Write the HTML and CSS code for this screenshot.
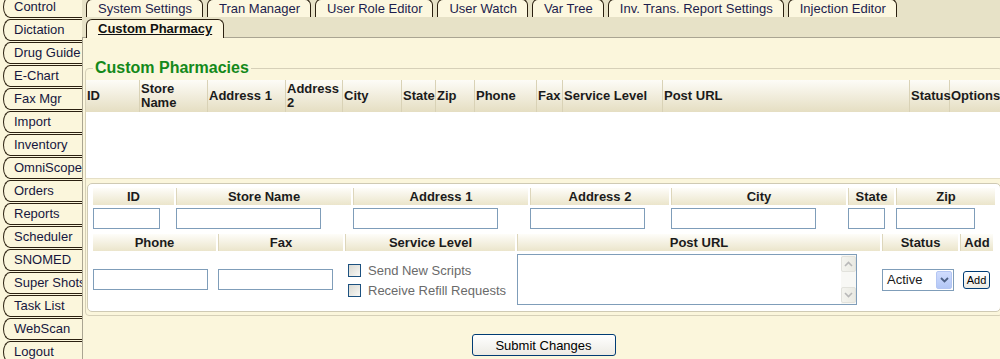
FILE: index.html
```html
<!DOCTYPE html>
<html lang="en">
<head>
  <meta charset="UTF-8" />
  <title>Custom Pharmacy</title>
  <link rel="stylesheet" href="styles.css">
</head>
<body>
  <div class="page">
    <nav class="sidebar">
      <a class="side-tab" href="#">Control</a>
      <a class="side-tab" href="#">Dictation</a>
      <a class="side-tab" href="#">Drug Guide</a>
      <a class="side-tab" href="#">E-Chart</a>
      <a class="side-tab" href="#">Fax Mgr</a>
      <a class="side-tab" href="#">Import</a>
      <a class="side-tab" href="#">Inventory</a>
      <a class="side-tab" href="#">OmniScope</a>
      <a class="side-tab" href="#">Orders</a>
      <a class="side-tab" href="#">Reports</a>
      <a class="side-tab" href="#">Scheduler</a>
      <a class="side-tab" href="#">SNOMED</a>
      <a class="side-tab" href="#">Super Shots</a>
      <a class="side-tab" href="#">Task List</a>
      <a class="side-tab" href="#">WebScan</a>
      <a class="side-tab" href="#">Logout</a>
    </nav>

    <div class="main">
      <div class="tabbar">
        <ul class="tabs top-row">
          <li>System Settings</li>
          <li>Tran Manager</li>
          <li>User Role Editor</li>
          <li>User Watch</li>
          <li>Var Tree</li>
          <li>Inv. Trans. Report Settings</li>
          <li>Injection Editor</li>
        </ul>
        <ul class="tabs sub-row">
          <li class="active">Custom Pharmacy</li>
        </ul>
      </div>

      <div class="content">
        <fieldset class="pharmacies">
          <legend>Custom Pharmacies</legend>

          <div class="list">
            <div class="list-head">
              <div>ID</div>
              <div>Store Name</div>
              <div>Address 1</div>
              <div>Address 2</div>
              <div>City</div>
              <div>State</div>
              <div>Zip</div>
              <div>Phone</div>
              <div>Fax</div>
              <div>Service Level</div>
              <div>Post URL</div>
              <div>Status</div>
              <div>Options</div>
            </div>
            <div class="list-body"></div>
          </div>

          <div class="editor">
            <div class="edit-row row-a heads">
              <div class="head">ID</div>
              <div class="head">Store Name</div>
              <div class="head">Address 1</div>
              <div class="head">Address 2</div>
              <div class="head">City</div>
              <div class="head">State</div>
              <div class="head">Zip</div>
            </div>
            <div class="edit-row row-a fields">
              <div><input type="text" class="w-id"></div>
              <div><input type="text" class="w-wide"></div>
              <div><input type="text" class="w-wide"></div>
              <div><input type="text" class="w-mid"></div>
              <div><input type="text" class="w-wide"></div>
              <div><input type="text" class="w-state"></div>
              <div><input type="text" class="w-zip"></div>
            </div>
            <div class="edit-row row-b heads">
              <div class="head">Phone</div>
              <div class="head">Fax</div>
              <div class="head">Service Level</div>
              <div class="head">Post URL</div>
              <div class="head">Status</div>
              <div class="head">Add</div>
            </div>
            <div class="edit-row row-b fields tall">
              <div class="cell-mid"><input type="text" class="w-mid"></div>
              <div class="cell-mid"><input type="text" class="w-mid"></div>
              <div class="checks">
                <label class="check"><input type="checkbox"> Send New Scripts</label>
                <label class="check"><input type="checkbox"> Receive Refill Requests</label>
              </div>
              <div class="url-box">
                <div class="url-text"></div>
                <div class="scrollbar">
                  <span class="sb-btn">
                    <svg width="9" height="6" viewBox="0 0 9 6"><path d="M1 5 L4.5 1.5 L8 5" fill="none" stroke="#b8b8b8" stroke-width="1.6"/></svg>
                  </span>
                  <span class="sb-track"></span>
                  <span class="sb-btn">
                    <svg width="9" height="6" viewBox="0 0 9 6"><path d="M1 1 L4.5 4.5 L8 1" fill="none" stroke="#b8b8b8" stroke-width="1.6"/></svg>
                  </span>
                </div>
              </div>
              <div class="cell-mid">
                <div class="select">
                  <span class="select-value">Active</span>
                  <span class="select-arrow">
                    <svg width="9" height="6" viewBox="0 0 9 6"><path d="M1 1 L4.5 4.5 L8 1" fill="none" stroke="#4d6185" stroke-width="1.8"/></svg>
                  </span>
                </div>
              </div>
              <div class="cell-mid"><button class="add-btn">Add</button></div>
            </div>
          </div>
        </fieldset>

        <div class="actions">
          <button class="submit-btn">Submit Changes</button>
        </div>
      </div>
    </div>
  </div>
</body>
</html>
```

FILE: styles.css
```css
body {
  margin: 0;
  font-family: "Liberation Sans", Arial, sans-serif;
  font-size: 13px;
  background: #fbf6dc;
  color: #1b1b1b;
  overflow: hidden;
}

.page {
  display: flex;
  height: 359px;
}

/* left navigation */
.sidebar {
  width: 82px;
  flex: none;
  margin-top: -4px;
  overflow: hidden;
  background: #fbf6dc;
}

.side-tab {
  display: block;
  height: 20px;
  line-height: 20px;
  margin: 0 0 1px 3px;
  padding-left: 10px;
  border: 1px solid #2b2010;
  border-right: none;
  border-radius: 7px 0 0 7px / 11px 0 0 11px;
  white-space: nowrap;
  overflow: hidden;
  color: #16163e;
  text-decoration: none;
}

.main {
  flex: 1;
  display: flex;
  flex-direction: column;
}

/* tab strip */
.tabbar {
  background: #e7e2c7;
  height: 37px;
  border-bottom: 1px solid #aaa592;
  padding-left: 4px;
}

.tabs {
  list-style: none;
  margin: 0;
  padding: 0;
  display: flex;
  gap: 4px;
}

.tabs li {
  background: #fcf7df;
  border: 1px solid #2b2010;
  border-bottom: none;
  border-radius: 6px 6px 0 0;
  padding: 0 10px 0 11px;
  white-space: nowrap;
  color: #1d1d4d;
}

.top-row {
  margin-top: -1px;
}

.top-row li {
  height: 17px;
  line-height: 17px;
}

.sub-row {
  margin-top: 2px;
}

.sub-row li {
  height: 18px;
  line-height: 18px;
  padding: 0 11px;
  font-weight: bold;
  color: #111;
  text-decoration: underline;
}

/* content */
.content {
  flex: 1;
  border-left: 1px solid #aaa592;
  background: #fbf6dc;
}

.pharmacies {
  margin: 21px 1px 0 2px;
  padding: 3px 0 3px 0;
  border: 1px solid #d6d0b8;
  border-radius: 4px;
  min-width: 0;
}

.pharmacies legend {
  margin-left: 7px;
  padding: 0 2px;
  font-size: 16px;
  line-height: 18px;
  font-weight: bold;
  color: #14891a;
}

.list-head {
  display: grid;
  grid-template-columns: 54px 68px 78px 57px 59px 34px 39px 62px 26px 100px 247px 40px 48px;
  height: 32px;
  background: linear-gradient(#fdfcf7, #e5dec2);
  font-weight: bold;
  line-height: 14px;
}

.list-head div {
  display: flex;
  align-items: center;
  padding-left: 1px;
  border-right: 1px solid #d9d2b6;
}

.list-head div:last-child {
  border-right: none;
}

.list-body {
  height: 66px;
  background: #fff;
  border-bottom: 1px solid #e5dfc6;
}

/* add / edit panel */
.editor {
  margin: 4px 1px 0;
  padding: 4px 5px 6px;
  background: #fff;
  border: 1px solid #cfcab4;
  border-radius: 5px;
  display: flex;
  flex-direction: column;
}

.edit-row {
  display: grid;
  column-gap: 2px;
}

.row-a {
  grid-template-columns: 81px 175px 175px 139px 175px 46px 99px;
}

.row-b {
  grid-template-columns: 123px 125px 170px 363px 76px 33px;
}

.heads {
  height: 17px;
}

.head {
  background: linear-gradient(#fefdf9, #ebe5cb);
  border-left: 1px solid #ddd6bb;
  font-weight: bold;
  text-align: center;
  line-height: 17px;
  white-space: nowrap;
}

.head:first-child {
  border-left: none;
}

.fields {
  height: 21px;
  margin: 3px 0 5px;
}

.fields.tall {
  height: 51px;
  margin-bottom: 0;
}

.edit-row input[type="text"] {
  box-sizing: border-box;
  height: 21px;
  margin: 0;
  padding: 0 2px;
  border: 1px solid #7f9db9;
  background: #fff;
  font: inherit;
  display: block;
}

.w-id { width: 67px; }
.w-wide { width: 145px; }
.w-mid { width: 115px; }
.w-state { width: 37px; }
.w-zip { width: 79px; }

.cell-mid {
  display: flex;
  align-items: center;
}

.checks {
  display: flex;
  flex-direction: column;
  justify-content: center;
  gap: 7px;
  padding: 1px 0 0 3px;
}

.check {
  display: flex;
  align-items: center;
  gap: 7px;
  height: 13px;
  color: #6a6a6a;
  white-space: nowrap;
}

.check input {
  appearance: none;
  width: 13px;
  height: 13px;
  margin: 0;
  border: 1px solid #1c5180;
  background: linear-gradient(135deg, #d9d9d2, #f8f8f5);
  flex: none;
}

.url-box {
  box-sizing: border-box;
  width: 340px;
  height: 51px;
  border: 1px solid #7f9db9;
  display: flex;
  background: #fff;
}

.url-text {
  flex: 1;
}

.scrollbar {
  width: 15px;
  display: flex;
  flex-direction: column;
  background: #f8f8f5;
  padding: 1px 0;
}

.sb-btn {
  box-sizing: border-box;
  height: 16px;
  border: 1px solid #e2e2dc;
  border-radius: 2px;
  background: linear-gradient(90deg, #f4f4ef, #eaeae3);
  display: flex;
  align-items: center;
  justify-content: center;
}

.sb-track {
  flex: 1;
}

.select {
  box-sizing: border-box;
  width: 72px;
  height: 22px;
  border: 1px solid #7f9db9;
  background: #fff;
  display: flex;
  align-items: center;
  padding: 1px;
}

.select-value {
  flex: 1;
  padding-left: 3px;
}

.select-arrow {
  box-sizing: border-box;
  width: 16px;
  height: 18px;
  border: 1px solid #b4c6f3;
  border-radius: 2px;
  background: linear-gradient(#d0dcfd, #b3c7f6);
  display: flex;
  align-items: center;
  justify-content: center;
}

.add-btn {
  width: 27px;
  height: 18px;
  margin-left: 3px;
  padding: 0;
  border: 1px solid #003c74;
  border-radius: 3px;
  background: linear-gradient(#ffffff, #ecebe4);
  font-family: "Liberation Sans", Arial, sans-serif;
  font-size: 11px;
  color: #000;
}

.actions {
  display: flex;
  justify-content: center;
  padding-top: 18px;
}

.submit-btn {
  width: 144px;
  height: 22px;
  padding: 0;
  border: 1px solid #003c74;
  border-radius: 3px;
  background: linear-gradient(#ffffff, #ecebe4);
  font-family: "Liberation Sans", Arial, sans-serif;
  font-size: 13px;
  color: #000;
}
```
